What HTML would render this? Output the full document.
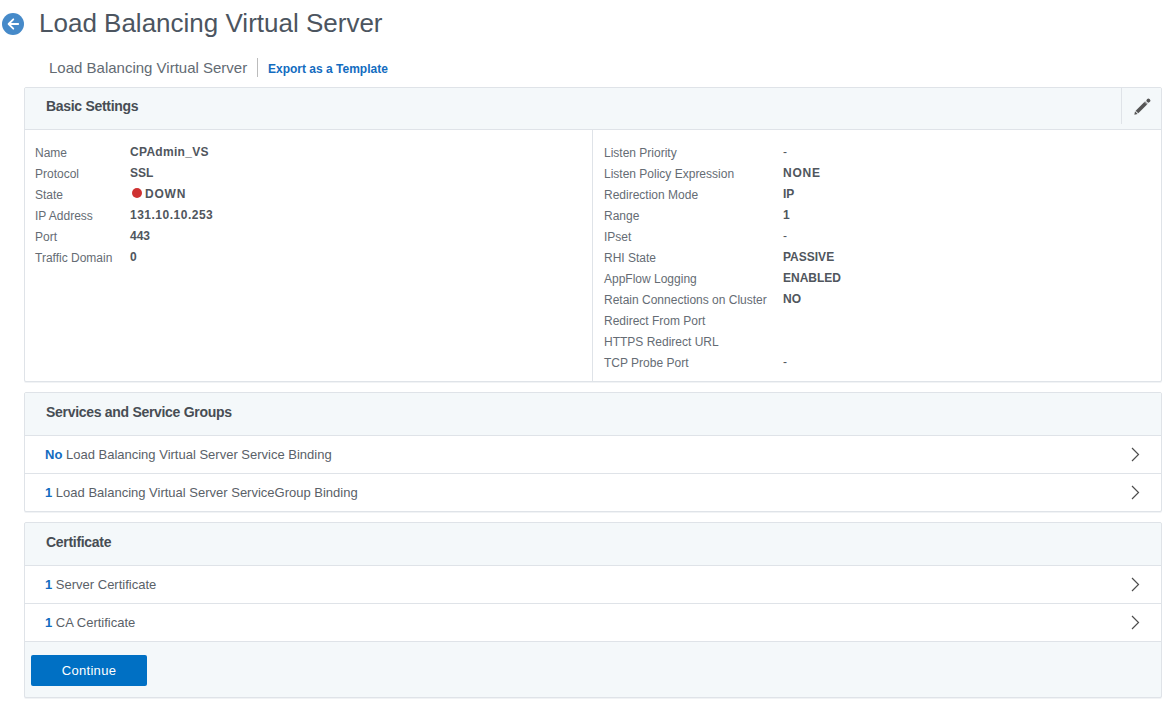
<!DOCTYPE html>
<html><head><meta charset="utf-8">
<style>
html,body{margin:0;padding:0;background:#fff;}
body{width:1170px;height:706px;overflow:hidden;position:relative;font-family:"Liberation Sans",sans-serif;}
.abs{position:absolute;white-space:nowrap;line-height:1;}
.title{left:39px;top:10px;font-size:26px;color:#4c5560;}
.sub{left:49px;top:60px;font-size:15px;color:#636b73;}
.sep{position:absolute;left:257px;top:58px;width:1px;height:19px;background:#bcbcbc;}
.link{left:268px;top:63px;font-size:12px;font-weight:bold;color:#136cc0;}
.panel{position:absolute;left:24px;width:1136px;border:1px solid #dfe3e8;border-radius:2px;background:#fff;box-shadow:0 1px 0 #f1f3f5;}
.ph{position:absolute;left:0;top:0;right:0;background:#f4f8fa;border-bottom:1px solid #dfe3e8;border-radius:2px 2px 0 0;}
.ht{left:21px;font-size:14px;letter-spacing:-0.3px;font-weight:bold;color:#474d54;}
.lbl{font-size:12px;color:#656c74;}
.val{font-size:12px;font-weight:bold;color:#50565d;}
.row{position:absolute;left:0;right:0;height:37px;border-bottom:1px solid #dfe3e8;}
.rt{left:20px;font-size:13px;color:#5a6168;}
.rt b{color:#136cc0;}
.kv{position:absolute;}
.r{position:relative;height:21px;line-height:21px;white-space:nowrap;}
.r .lbl{position:absolute;left:0;top:0;}
.r .val{position:absolute;top:-1px;}
.dash{font-weight:normal;}
.dot{display:inline-block;width:10px;height:10px;border-radius:50%;background:#cf3232;margin-left:2px;margin-right:3px;vertical-align:0px;}
.chev{position:absolute;left:1106px;top:11px;}
.btn{position:absolute;left:6px;top:132px;width:116px;height:31px;line-height:31px;text-align:center;background:#0070c4;color:#fff;font-size:13px;letter-spacing:0.3px;border-radius:2px;}
</style></head><body>
<!-- back icon -->
<svg class="abs" style="left:2px;top:13px" width="22" height="22" viewBox="0 0 22 22">
<circle cx="11" cy="11" r="11" fill="#468ac9"/>
<path d="M16.2 11H7M11.3 6.3L6.6 11L11.3 15.7" stroke="#fff" stroke-width="1.8" fill="none" stroke-linecap="round" stroke-linejoin="round"/>
</svg>
<div class="abs title">Load Balancing Virtual Server</div>
<div class="abs sub">Load Balancing Virtual Server</div>
<div class="sep"></div>
<div class="abs link">Export as a Template</div>

<!-- panel 1 -->
<div class="panel" style="top:87px;height:293px;">
  <div class="ph" style="height:41px;"></div>
  <div class="abs ht" style="top:11px;">Basic Settings</div>
  <div style="position:absolute;left:1096px;top:0px;width:1px;height:36px;background:#dfe3e8;"></div>
  <svg class="abs" style="left:1106px;top:8px" width="22" height="22" viewBox="0 0 22 22"><g transform="translate(10.9 11.05) rotate(-45)" fill="#555"><path d="M-10.8 0.2L-7.9 -1.9L-7.9 1.9Z"/><rect x="-7" y="-1.9" width="12.4" height="3.8"/><rect x="5.4" y="-1.9" width="1" height="3.8" fill="#888"/><rect x="7.3" y="-1.9" width="3.8" height="3.8" rx="1.6"/></g></svg>
  <div style="position:absolute;left:567px;top:42px;width:1px;bottom:0;background:#dfe3e8;"></div>
  <div class="kv" style="left:10px;top:55px;">
    <div class="r"><span class="lbl">Name</span><span class="val" style="left:95px"><span style="letter-spacing:0.3px">CPAdmin_VS</span></span></div>
    <div class="r"><span class="lbl">Protocol</span><span class="val" style="left:95px">SSL</span></div>
    <div class="r"><span class="lbl">State</span><span class="val" style="left:95px"><span class="dot"></span><span style="letter-spacing:0.8px">DOWN</span></span></div>
    <div class="r"><span class="lbl">IP Address</span><span class="val" style="left:95px"><span style="letter-spacing:0.5px">131.10.10.253</span></span></div>
    <div class="r"><span class="lbl">Port</span><span class="val" style="left:95px">443</span></div>
    <div class="r"><span class="lbl">Traffic Domain</span><span class="val" style="left:95px">0</span></div>
  </div>
  <div class="kv" style="left:579px;top:55px;">
    <div class="r"><span class="lbl">Listen Priority</span><span class="val" style="left:179px"><span class="dash">-</span></span></div>
    <div class="r"><span class="lbl">Listen Policy Expression</span><span class="val" style="left:179px"><span style="letter-spacing:0.8px">NONE</span></span></div>
    <div class="r"><span class="lbl">Redirection Mode</span><span class="val" style="left:179px">IP</span></div>
    <div class="r"><span class="lbl">Range</span><span class="val" style="left:179px">1</span></div>
    <div class="r"><span class="lbl">IPset</span><span class="val" style="left:179px"><span class="dash">-</span></span></div>
    <div class="r"><span class="lbl">RHI State</span><span class="val" style="left:179px">PASSIVE</span></div>
    <div class="r"><span class="lbl">AppFlow Logging</span><span class="val" style="left:179px">ENABLED</span></div>
    <div class="r"><span class="lbl">Retain Connections on Cluster</span><span class="val" style="left:179px">NO</span></div>
    <div class="r"><span class="lbl">Redirect From Port</span><span class="val" style="left:179px"></span></div>
    <div class="r"><span class="lbl">HTTPS Redirect URL</span><span class="val" style="left:179px"></span></div>
    <div class="r"><span class="lbl">TCP Probe Port</span><span class="val" style="left:179px"><span class="dash">-</span></span></div>
  </div>
</div>

<!-- panel 2 -->
<div class="panel" style="top:392px;height:118px;">
  <div class="ph" style="height:42px;"></div>
  <div class="abs ht" style="top:12px;">Services and Service Groups</div>
  <div class="row" style="top:43px;"><div class="abs rt" style="top:12px;"><b>No</b> Load Balancing Virtual Server Service Binding</div><svg class="chev" width="9" height="15" viewBox="0 0 9 15"><path d="M1 1L7.5 7.5L1 14" stroke="#4d4d4d" stroke-width="1.2" fill="none"/></svg></div>
  <div class="row" style="top:81px;border-bottom:none;"><div class="abs rt" style="top:12px;"><b>1</b> Load Balancing Virtual Server ServiceGroup Binding</div><svg class="chev" width="9" height="15" viewBox="0 0 9 15"><path d="M1 1L7.5 7.5L1 14" stroke="#4d4d4d" stroke-width="1.2" fill="none"/></svg></div>
</div>

<!-- panel 3 -->
<div class="panel" style="top:522px;height:174px;background:#f4f8fa;">
  <div class="ph" style="height:42px;"></div>
  <div class="abs ht" style="top:12px;">Certificate</div>
  <div class="row" style="top:43px;background:#fff;"><div class="abs rt" style="top:12px;"><b>1</b> Server Certificate</div><svg class="chev" width="9" height="15" viewBox="0 0 9 15"><path d="M1 1L7.5 7.5L1 14" stroke="#4d4d4d" stroke-width="1.2" fill="none"/></svg></div>
  <div class="row" style="top:81px;background:#fff;"><div class="abs rt" style="top:12px;"><b>1</b> CA Certificate</div><svg class="chev" width="9" height="15" viewBox="0 0 9 15"><path d="M1 1L7.5 7.5L1 14" stroke="#4d4d4d" stroke-width="1.2" fill="none"/></svg></div>
  <div class="btn">Continue</div>
</div>
</body></html>
